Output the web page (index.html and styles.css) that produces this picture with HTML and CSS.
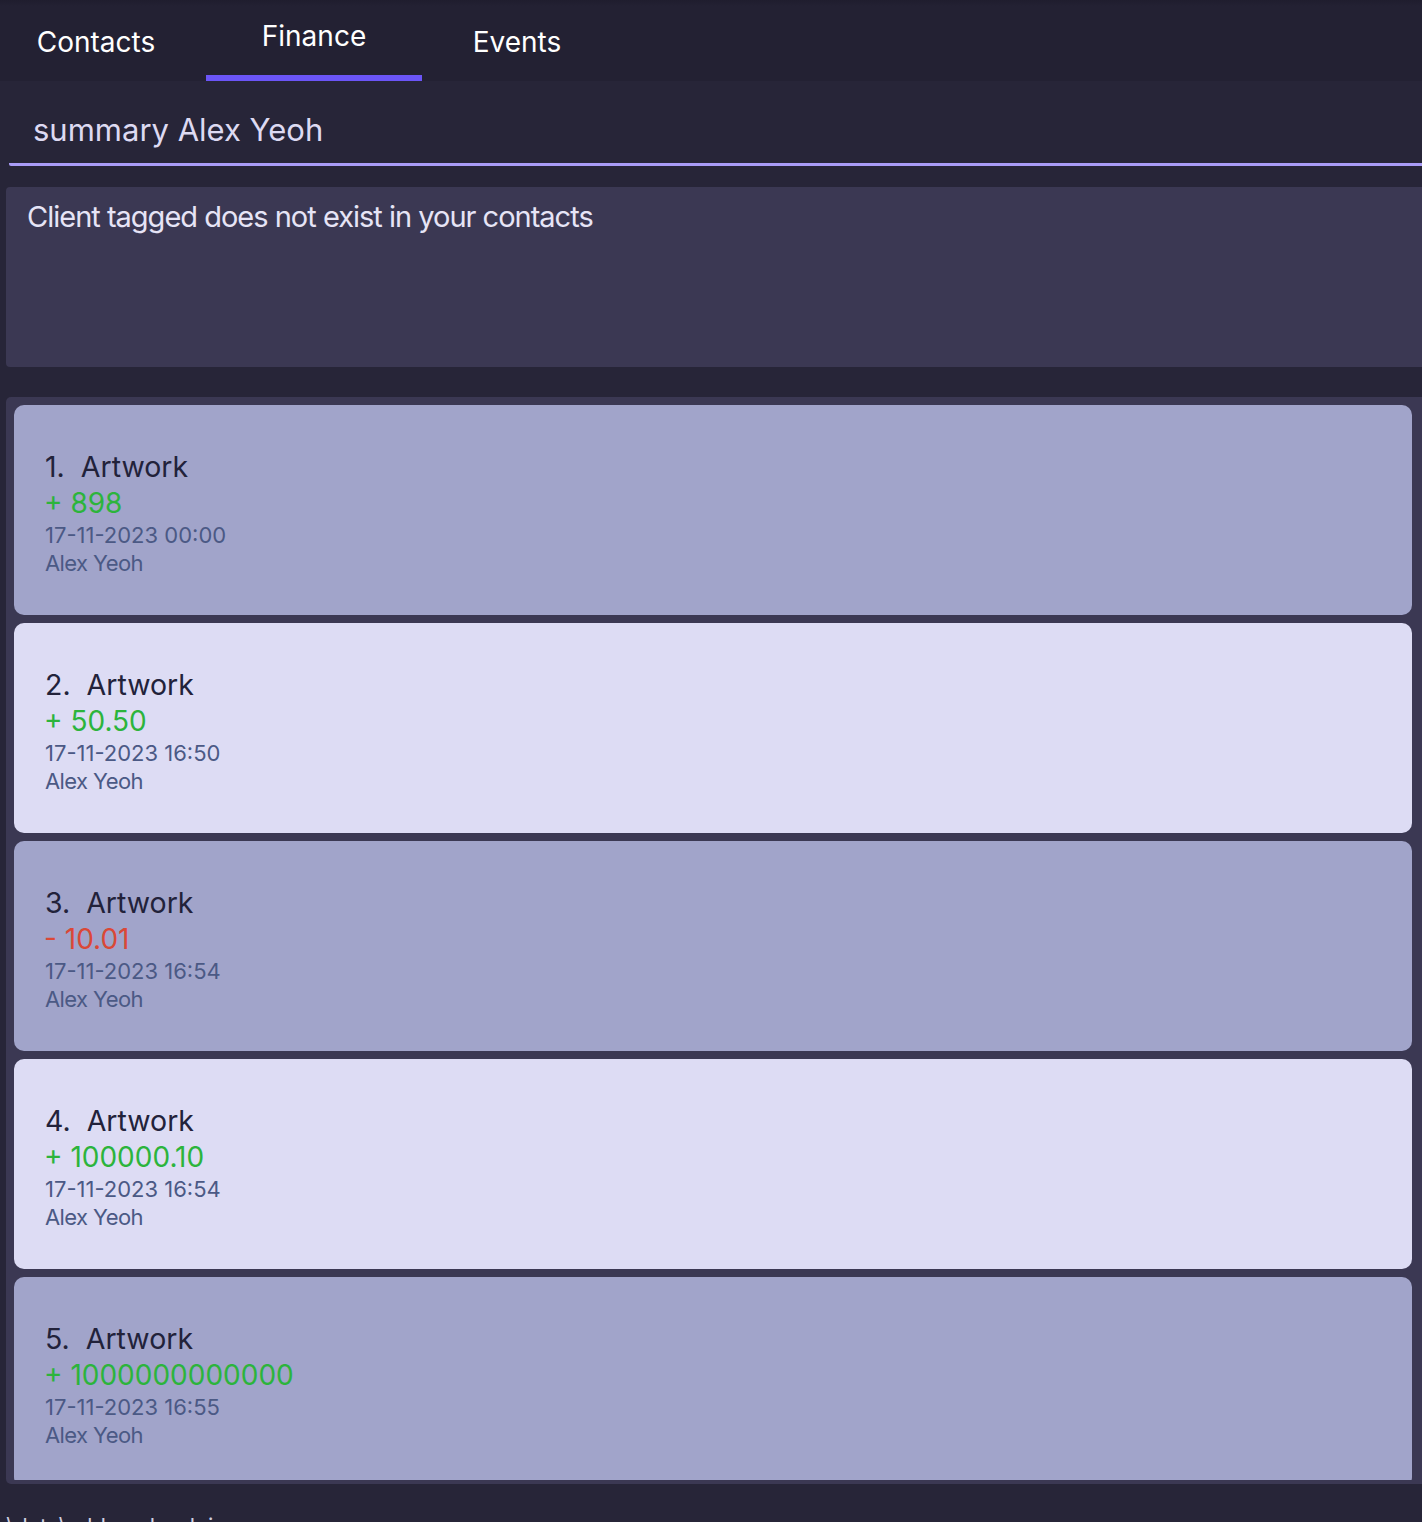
FILE: index.html
```html
<!DOCTYPE html>
<html lang="en">
<head>
<meta charset="utf-8">
<title>Finance</title>
<link rel="stylesheet" href="styles.css">
</head>
<body>
<div class="app">
  <nav class="tabs">
    <div class="tab tab-contacts">Contacts</div>
    <div class="tab tab-finance active">Finance</div>
    <div class="tab tab-events">Events</div>
  </nav>

  <div class="command">
    <div class="command-text">summary Alex Yeoh</div>
  </div>

  <div class="result">Client tagged does not exist in your contacts</div>

  <div class="panel">
    <div class="list">
      <div class="card odd">
        <div class="title"><span class="idx">1.</span>Artwork</div>
        <div class="amount pos">+ 898</div>
        <div class="meta">17-11-2023 00:00</div>
        <div class="meta name">Alex Yeoh</div>
      </div>
      <div class="card even">
        <div class="title"><span class="idx">2.</span>Artwork</div>
        <div class="amount pos">+ 50.50</div>
        <div class="meta">17-11-2023 16:50</div>
        <div class="meta name">Alex Yeoh</div>
      </div>
      <div class="card odd">
        <div class="title"><span class="idx">3.</span>Artwork</div>
        <div class="amount neg">- 10.01</div>
        <div class="meta">17-11-2023 16:54</div>
        <div class="meta name">Alex Yeoh</div>
      </div>
      <div class="card even">
        <div class="title"><span class="idx">4.</span>Artwork</div>
        <div class="amount pos">+ 100000.10</div>
        <div class="meta">17-11-2023 16:54</div>
        <div class="meta name">Alex Yeoh</div>
      </div>
      <div class="card odd">
        <div class="title"><span class="idx">5.</span>Artwork</div>
        <div class="amount pos">+ 1000000000000</div>
        <div class="meta">17-11-2023 16:55</div>
        <div class="meta name">Alex Yeoh</div>
      </div>
    </div>
  </div>

  <div class="status">.\data\addressbook.json</div>
</div>
</body>
</html>
```

FILE: styles.css
```css
html, body {
  margin: 0;
  padding: 0;
}

body {
  background: #272538;
  font-family: Inter, "Noto Sans", "Liberation Sans", sans-serif;
  width: 1422px;
  height: 1522px;
  overflow: hidden;
}

.app {
  display: flex;
  flex-direction: column;
}

/* Tabs */
.tabs {
  display: flex;
  height: 81px;
  background: linear-gradient(#1f1d2e 0px, #232133 6px, #232133 100%);
}

.tab {
  box-sizing: border-box;
  height: 81px;
  color: #ffffff;
  font-size: 28px;
  line-height: 36px;
  text-align: center;
  padding-top: 24px;
}

.tab-contacts {
  width: 192px;
  margin-right: 14px;
}

.tab-finance {
  width: 216px;
}

.tab-events {
  width: 190px;
}

.tab.active {
  padding-top: 18px;
  border-bottom: 6px solid #6b55f7;
}

/* Command box */
.command {
  margin-left: 9px;
  height: 85px;
  box-sizing: border-box;
  border-bottom: 3px solid #a99cf7;
  border-bottom-left-radius: 2px;
  padding-left: 24px;
  padding-top: 29px;
}

.command-text {
  color: #dddaf2;
  font-size: 31px;
  line-height: 40px;
}

/* Result box */
.result {
  margin-top: 21px;
  margin-left: 6px;
  height: 180px;
  box-sizing: border-box;
  background: #3b3853;
  border-radius: 4px 0 0 4px;
  color: #e6e4f6;
  font-size: 29px;
  line-height: 36px;
  padding: 12px 0 0 21px;
  letter-spacing: -1px;
}

/* List panel */
.panel {
  margin-top: 30px;
  margin-left: 6px;
  height: 1087px;
  box-sizing: border-box;
  background: #3b3853;
  border-radius: 5px 0 0 5px;
  padding: 8px 10px 4px 8px;
}

.list {
  height: 100%;
  overflow: hidden;
  display: flex;
  flex-direction: column;
  gap: 8px;
}

.card {
  flex-shrink: 0;
  height: 210px;
  box-sizing: border-box;
  border-radius: 10px;
  padding: 44px 0 0 31px;
}

.card.odd {
  background: #a1a4ca;
}

.card.even {
  background: #dddcf4;
}

.title {
  color: #22223a;
  font-size: 28.5px;
  line-height: 36px;
}

.idx {
  display: inline-block;
  margin-right: 16px;
}

.amount {
  font-size: 28px;
  line-height: 36px;
  margin-left: -1px;
}

.amount.pos {
  color: #2cb43c;
}

.amount.neg {
  color: #da4837;
}

.meta {
  color: #4b5985;
  font-size: 22px;
  line-height: 28px;
}

.meta.name {
  letter-spacing: -0.6px;
}

/* Status bar (cut off at bottom) */
.status {
  padding-top: 28px;
  padding-left: 0;
  color: #d0cfe0;
  font-size: 22px;
  line-height: 28px;
}
```
